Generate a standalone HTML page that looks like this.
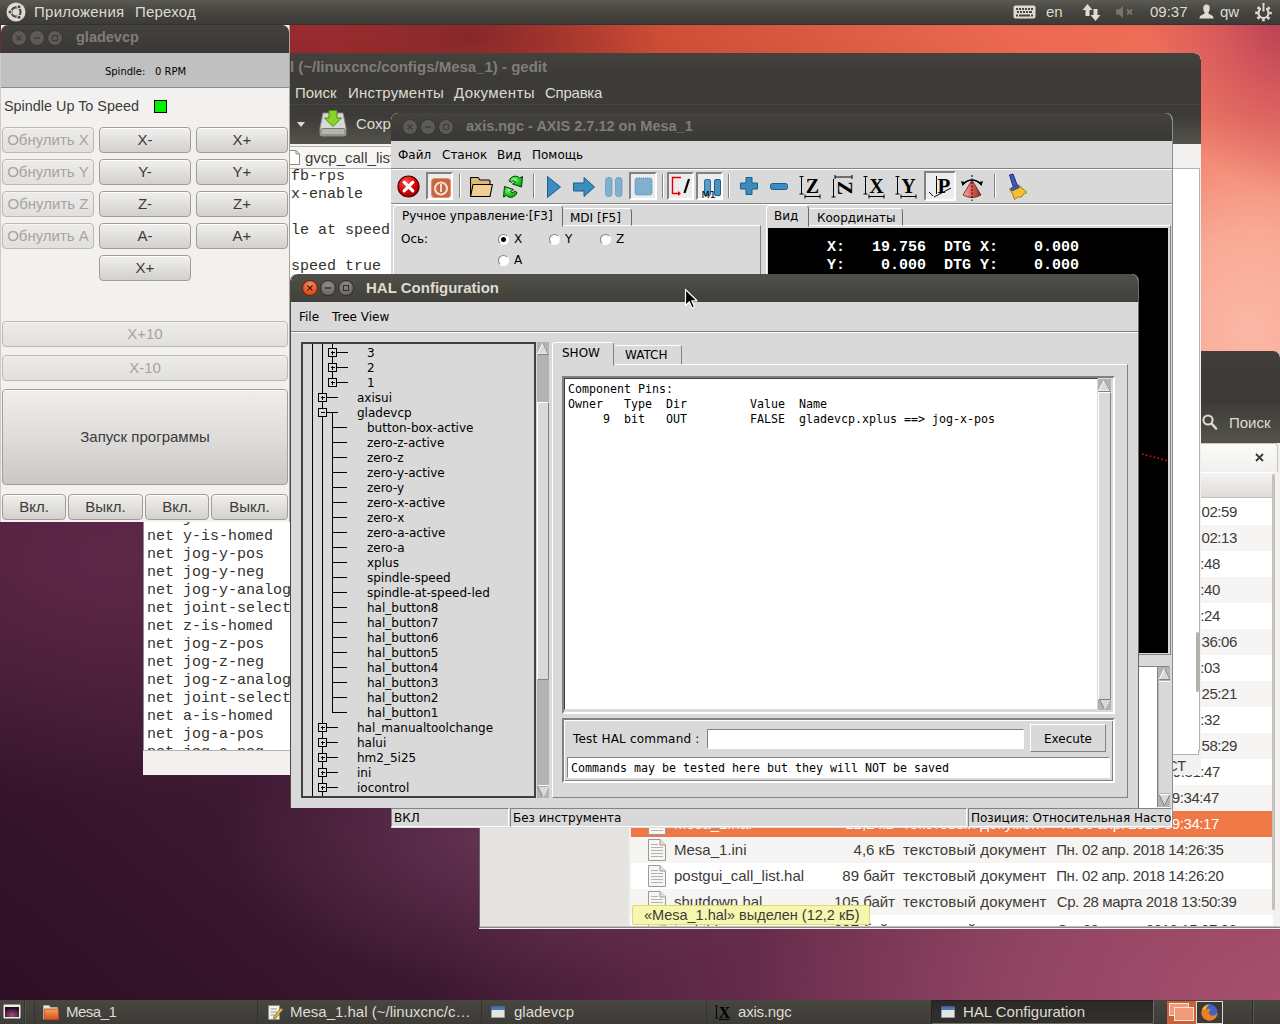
<!DOCTYPE html>
<html lang="ru">
<head>
<meta charset="utf-8">
<title>Desktop</title>
<style>
*{box-sizing:border-box;margin:0;padding:0}
html,body{width:1280px;height:1024px;overflow:hidden}
body{position:relative;font-family:"Liberation Sans","DejaVu Sans",sans-serif;font-size:15px;color:#3c3b37;
background:
 radial-gradient(ellipse 190px 70px at 470px 36px, rgba(104,26,36,.6) 0%, rgba(110,30,40,0) 100%),
 radial-gradient(ellipse 150px 190px at 1295px 5px, rgba(170,52,84,.9) 0%, rgba(190,64,88,.5) 50%, rgba(220,90,90,0) 100%),
 radial-gradient(ellipse 300px 330px at 1250px 330px, #fcb8a6 0%, rgba(250,176,156,.9) 30%, rgba(244,140,118,.5) 65%, rgba(238,110,90,0) 100%),
 radial-gradient(ellipse 900px 520px at 1330px 1010px, #aa5270 0%, rgba(150,72,102,.9) 35%, rgba(120,56,88,.5) 65%, rgba(90,40,66,0) 100%),
 radial-gradient(ellipse 300px 150px at 520px 840px, rgba(125,72,104,.55) 0%, rgba(100,56,84,0) 100%),
 radial-gradient(ellipse 480px 240px at 110px 560px, rgba(98,42,74,.85) 0%, rgba(80,34,60,0) 100%),
 linear-gradient(40deg, #2c0e22 0%, #38162c 15%, #431a36 25%, #6a2648 45%, #98282e 58%, #cc4c34 73%, #ec6a52 88%, #ee6c5a 100%);
}
.abs{position:absolute}
.win{position:absolute;overflow:hidden}
.tb{position:absolute;left:0;top:0;right:0;border-radius:7px 7px 0 0;background:linear-gradient(#43423d,#3c3b37 70%,#3a3935);color:#807d78;font-weight:bold;font-size:14.5px}
.tb .t{position:absolute;white-space:nowrap}
.wb{position:absolute;width:16px;height:16px;border-radius:8px;background:#5f5d58;border:1px solid #35342f}
.wb i{position:absolute;left:0;top:0;width:14px;height:14px;display:block}
.panel{position:absolute;left:0;width:1280px;color:#dfdbd2;font-size:15px;white-space:nowrap}
.dj{font-family:"DejaVu Sans","Liberation Sans",sans-serif}
.mono{font-family:"DejaVu Sans Mono","Liberation Mono",monospace}
.lm{font-family:"Liberation Mono","DejaVu Sans Mono",monospace}
.nw{white-space:nowrap}
/* gtk buttons in gladevcp */
.gb{position:absolute;height:26px;border:1px solid #a19d97;border-radius:4px;background:linear-gradient(#f1f0ee,#e3e2df 45%,#d1d0cd);text-align:center;line-height:24px;font-size:15px;color:#3c3b37;box-shadow:inset 0 1px 0 #fff;white-space:nowrap}
.gb.dis{color:#a6a39d;border-color:#bcb9b4;background:linear-gradient(#edecea,#e1e0dd);box-shadow:inset 0 1px 0 #f6f5f4}
</style>
</head>
<body>

<!-- ================= NAUTILUS ================= -->
<div class="win" id="naut" style="left:479px;top:351px;width:801px;height:578px;background:#f2f1f0;border-radius:0 7px 0 0">
<div class="abs" style="left:0;top:0;width:801px;height:92px;background:linear-gradient(#403f3a 0,#3c3b37 20px,#3c3b37 50px,#353430 51px,#3d3c38 52px,#55534b 92px)"></div>
<svg class="abs" style="left:723px;top:63px" width="16" height="17" viewBox="0 0 16 17"><circle cx="6" cy="6" r="4.6" fill="none" stroke="#dfdbd2" stroke-width="2"/><path d="M9.500 9.500 L14 14.500" stroke="#dfdbd2" stroke-width="2.6" stroke-linecap="round"/></svg>
<span class="abs nw" style="left:750px;top:63px;color:#dfdbd2;font-size:15px">Поиск</span>
<div class="abs" style="left:0;top:92px;width:799px;height:31px;background:linear-gradient(#fbfbfa,#f0efee);border-radius:0 4px 0 0;border-right:1px solid #c6c3be;border-top:1px solid #c6c3be"></div>
<svg class="abs" style="left:776px;top:102px" width="9" height="9" viewBox="0 0 9 9"><path d="M1 1 L8 8 M8 1 L1 8" stroke="#3c3b37" stroke-width="1.8"/></svg>
<div class="abs" style="left:0;top:119px;width:152px;height:460px;background:#e6e4e1;border-right:2px solid #f2f1f0"></div>
<div class="abs" style="left:152px;top:121px;width:642px;height:456px;background:#fff"></div>
<div class="abs" style="left:152px;top:122px;width:642px;height:25px;background:linear-gradient(#f4f3f2,#dedcd9);border-bottom:1px solid #c4c1bc"></div>
<div class="abs nw" style="left:152px;top:148px;width:642px;height:26px;background:#fff;color:#3c3b37;font-size:15px;line-height:26px"><svg class="abs" style="left:17px;top:2px" width="18" height="22" viewBox="0 0 18 22"><path d="M0.500 0.500 H12 L17.500 6 V21.500 H0.500 Z" fill="#f6f6f5" stroke="#9a9996"/><path d="M12 0.500 V6 H17.500" fill="#e4e4e2" stroke="#9a9996"/><path d="M3 5.500 H10 M3 8.500 H15 M3 11.500 H15 M3 14.500 H15 M3 17.500 H15" stroke="#b4b3b0"/></svg><span class="abs" style="left:43px">axis.ngc</span><span class="abs" style="right:378px">1,1 кБ</span><span class="abs" style="left:272px;letter-spacing:.17px">текстовый документ</span><span class="abs" style="letter-spacing:-0.4px;right:36.0px">Пт. 30 марта 2018 16:02:59</span></div>
<div class="abs nw" style="left:152px;top:174px;width:642px;height:26px;background:#f6f5f4;color:#3c3b37;font-size:15px;line-height:26px"><svg class="abs" style="left:17px;top:2px" width="18" height="22" viewBox="0 0 18 22"><path d="M0.500 0.500 H12 L17.500 6 V21.500 H0.500 Z" fill="#f6f6f5" stroke="#9a9996"/><path d="M12 0.500 V6 H17.500" fill="#e4e4e2" stroke="#9a9996"/><path d="M3 5.500 H10 M3 8.500 H15 M3 11.500 H15 M3 14.500 H15 M3 17.500 H15" stroke="#b4b3b0"/></svg><span class="abs" style="left:43px">custom.hal</span><span class="abs" style="right:378px">341 байт</span><span class="abs" style="left:272px;letter-spacing:.17px">текстовый документ</span><span class="abs" style="letter-spacing:-0.4px;right:36.0px">Пт. 30 марта 2018 16:02:13</span></div>
<div class="abs nw" style="left:152px;top:200px;width:642px;height:26px;background:#fff;color:#3c3b37;font-size:15px;line-height:26px"><svg class="abs" style="left:17px;top:2px" width="18" height="22" viewBox="0 0 18 22"><path d="M0.500 0.500 H12 L17.500 6 V21.500 H0.500 Z" fill="#f6f6f5" stroke="#9a9996"/><path d="M12 0.500 V6 H17.500" fill="#e4e4e2" stroke="#9a9996"/><path d="M3 5.500 H10 M3 8.500 H15 M3 11.500 H15 M3 14.500 H15 M3 17.500 H15" stroke="#b4b3b0"/></svg><span class="abs" style="left:43px">custom_postgui.hal</span><span class="abs" style="right:378px">120 байт</span><span class="abs" style="left:272px;letter-spacing:.17px">текстовый документ</span><span class="abs" style="letter-spacing:-0.4px;right:53.0px">Ср. 04 апр. 2018 16:11:48</span></div>
<div class="abs nw" style="left:152px;top:226px;width:642px;height:26px;background:#f6f5f4;color:#3c3b37;font-size:15px;line-height:26px"><svg class="abs" style="left:17px;top:2px" width="18" height="22" viewBox="0 0 18 22"><path d="M0.500 0.500 H12 L17.500 6 V21.500 H0.500 Z" fill="#f6f6f5" stroke="#9a9996"/><path d="M12 0.500 V6 H17.500" fill="#e4e4e2" stroke="#9a9996"/><path d="M3 5.500 H10 M3 8.500 H15 M3 11.500 H15 M3 14.500 H15 M3 17.500 H15" stroke="#b4b3b0"/></svg><span class="abs" style="left:43px">gvcp.glade</span><span class="abs" style="right:378px">24,8 кБ</span><span class="abs" style="left:272px;letter-spacing:.17px">текстовый документ</span><span class="abs" style="letter-spacing:-0.4px;right:53.0px">Ср. 04 апр. 2018 16:07:40</span></div>
<div class="abs nw" style="left:152px;top:252px;width:642px;height:26px;background:#fff;color:#3c3b37;font-size:15px;line-height:26px"><svg class="abs" style="left:17px;top:2px" width="18" height="22" viewBox="0 0 18 22"><path d="M0.500 0.500 H12 L17.500 6 V21.500 H0.500 Z" fill="#f6f6f5" stroke="#9a9996"/><path d="M12 0.500 V6 H17.500" fill="#e4e4e2" stroke="#9a9996"/><path d="M3 5.500 H10 M3 8.500 H15 M3 11.500 H15 M3 14.500 H15 M3 17.500 H15" stroke="#b4b3b0"/></svg><span class="abs" style="left:43px">gvcp.ui</span><span class="abs" style="right:378px">24,6 кБ</span><span class="abs" style="left:272px;letter-spacing:.17px">текстовый документ</span><span class="abs" style="letter-spacing:-0.4px;right:53.0px">Ср. 04 апр. 2018 15:58:24</span></div>
<div class="abs nw" style="left:152px;top:278px;width:642px;height:26px;background:#f6f5f4;color:#3c3b37;font-size:15px;line-height:26px"><svg class="abs" style="left:17px;top:2px" width="18" height="22" viewBox="0 0 18 22"><path d="M0.500 0.500 H12 L17.500 6 V21.500 H0.500 Z" fill="#f6f6f5" stroke="#9a9996"/><path d="M12 0.500 V6 H17.500" fill="#e4e4e2" stroke="#9a9996"/><path d="M3 5.500 H10 M3 8.500 H15 M3 11.500 H15 M3 14.500 H15 M3 17.500 H15" stroke="#b4b3b0"/></svg><span class="abs" style="left:43px">gvcp_call_list.hal</span><span class="abs" style="right:378px">1,9 кБ</span><span class="abs" style="left:272px;letter-spacing:.17px">текстовый документ</span><span class="abs" style="letter-spacing:-0.4px;right:36.0px">Пт. 30 марта 2018 15:36:06</span></div>
<div class="abs nw" style="left:152px;top:304px;width:642px;height:26px;background:#fff;color:#3c3b37;font-size:15px;line-height:26px"><svg class="abs" style="left:17px;top:2px" width="18" height="22" viewBox="0 0 18 22"><path d="M0.500 0.500 H12 L17.500 6 V21.500 H0.500 Z" fill="#f6f6f5" stroke="#9a9996"/><path d="M12 0.500 V6 H17.500" fill="#e4e4e2" stroke="#9a9996"/><path d="M3 5.500 H10 M3 8.500 H15 M3 11.500 H15 M3 14.500 H15 M3 17.500 H15" stroke="#b4b3b0"/></svg><span class="abs" style="left:43px">gvcp_options.hal</span><span class="abs" style="right:378px">212 байт</span><span class="abs" style="left:272px;letter-spacing:.17px">текстовый документ</span><span class="abs" style="letter-spacing:-0.4px;right:53.0px">Ср. 04 апр. 2018 15:21:03</span></div>
<div class="abs nw" style="left:152px;top:330px;width:642px;height:26px;background:#f6f5f4;color:#3c3b37;font-size:15px;line-height:26px"><svg class="abs" style="left:17px;top:2px" width="18" height="22" viewBox="0 0 18 22"><path d="M0.500 0.500 H12 L17.500 6 V21.500 H0.500 Z" fill="#f6f6f5" stroke="#9a9996"/><path d="M12 0.500 V6 H17.500" fill="#e4e4e2" stroke="#9a9996"/><path d="M3 5.500 H10 M3 8.500 H15 M3 11.500 H15 M3 14.500 H15 M3 17.500 H15" stroke="#b4b3b0"/></svg><span class="abs" style="left:43px">linuxcnc.var</span><span class="abs" style="right:378px">1,6 кБ</span><span class="abs" style="left:272px;letter-spacing:.17px">текстовый документ</span><span class="abs" style="letter-spacing:-0.4px;right:36.0px">Чт. 29 марта 2018 14:25:21</span></div>
<div class="abs nw" style="left:152px;top:356px;width:642px;height:26px;background:#fff;color:#3c3b37;font-size:15px;line-height:26px"><svg class="abs" style="left:17px;top:2px" width="18" height="22" viewBox="0 0 18 22"><path d="M0.500 0.500 H12 L17.500 6 V21.500 H0.500 Z" fill="#f6f6f5" stroke="#9a9996"/><path d="M12 0.500 V6 H17.500" fill="#e4e4e2" stroke="#9a9996"/><path d="M3 5.500 H10 M3 8.500 H15 M3 11.500 H15 M3 14.500 H15 M3 17.500 H15" stroke="#b4b3b0"/></svg><span class="abs" style="left:43px">linuxcnc.var.bak</span><span class="abs" style="right:378px">1,6 кБ</span><span class="abs" style="left:272px;letter-spacing:.17px">текстовый документ</span><span class="abs" style="letter-spacing:-0.4px;right:53.0px">Ср. 04 апр. 2018 14:18:32</span></div>
<div class="abs nw" style="left:152px;top:382px;width:642px;height:26px;background:#f6f5f4;color:#3c3b37;font-size:15px;line-height:26px"><svg class="abs" style="left:17px;top:2px" width="18" height="22" viewBox="0 0 18 22"><path d="M0.500 0.500 H12 L17.500 6 V21.500 H0.500 Z" fill="#f6f6f5" stroke="#9a9996"/><path d="M12 0.500 V6 H17.500" fill="#e4e4e2" stroke="#9a9996"/><path d="M3 5.500 H10 M3 8.500 H15 M3 11.500 H15 M3 14.500 H15 M3 17.500 H15" stroke="#b4b3b0"/></svg><span class="abs" style="left:43px">Mesa_1.pncconf</span><span class="abs" style="right:378px">18,4 кБ</span><span class="abs" style="left:272px;letter-spacing:.17px">текстовый документ</span><span class="abs" style="letter-spacing:-0.4px;right:36.0px">Ср. 28 марта 2018 17:58:29</span></div>
<div class="abs nw" style="left:152px;top:408px;width:642px;height:26px;background:#fff;color:#3c3b37;font-size:15px;line-height:26px"><svg class="abs" style="left:17px;top:2px" width="18" height="22" viewBox="0 0 18 22"><path d="M0.500 0.500 H12 L17.500 6 V21.500 H0.500 Z" fill="#f6f6f5" stroke="#9a9996"/><path d="M12 0.500 V6 H17.500" fill="#e4e4e2" stroke="#9a9996"/><path d="M3 5.500 H10 M3 8.500 H15 M3 11.500 H15 M3 14.500 H15 M3 17.500 H15" stroke="#b4b3b0"/></svg><span class="abs" style="left:43px">Mesa_1.hal~</span><span class="abs" style="right:378px">12,2 кБ</span><span class="abs" style="left:272px;letter-spacing:.17px">текстовый документ</span><span class="abs" style="letter-spacing:-0.4px;right:53.0px">Чт. 05 апр. 2018 09:31:47</span></div>
<div class="abs nw" style="left:152px;top:434px;width:642px;height:26px;background:#f6f5f4;color:#3c3b37;font-size:15px;line-height:26px"><svg class="abs" style="left:17px;top:2px" width="18" height="22" viewBox="0 0 18 22"><path d="M0.500 0.500 H12 L17.500 6 V21.500 H0.500 Z" fill="#f6f6f5" stroke="#9a9996"/><path d="M12 0.500 V6 H17.500" fill="#e4e4e2" stroke="#9a9996"/><path d="M3 5.500 H10 M3 8.500 H15 M3 11.500 H15 M3 14.500 H15 M3 17.500 H15" stroke="#b4b3b0"/></svg><span class="abs" style="left:43px">Mesa_1.ini~</span><span class="abs" style="right:378px">4,6 кБ</span><span class="abs" style="left:272px;letter-spacing:.17px">текстовый документ</span><span class="abs" style="letter-spacing:-0.4px;right:54.0px">Чт. 05 апр. 2018 09:34:47</span></div>
<div class="abs nw" style="left:152px;top:460px;width:642px;height:26px;background:#f07746;color:#fff;font-size:15px;line-height:26px"><svg class="abs" style="left:17px;top:2px" width="18" height="22" viewBox="0 0 18 22"><path d="M0.500 0.500 H12 L17.500 6 V21.500 H0.500 Z" fill="#f6f6f5" stroke="#9a9996"/><path d="M12 0.500 V6 H17.500" fill="#e4e4e2" stroke="#9a9996"/><path d="M3 5.500 H10 M3 8.500 H15 M3 11.500 H15 M3 14.500 H15 M3 17.500 H15" stroke="#b4b3b0"/></svg><span class="abs" style="left:43px">Mesa_1.hal</span><span class="abs" style="right:378px">12,2 кБ</span><span class="abs" style="left:272px;letter-spacing:.17px">текстовый документ</span><span class="abs" style="letter-spacing:-0.4px;right:54.0px">Чт. 05 апр. 2018 09:34:17</span></div>
<div class="abs nw" style="left:152px;top:486px;width:642px;height:26px;background:#f6f5f4;color:#3c3b37;font-size:15px;line-height:26px"><svg class="abs" style="left:17px;top:2px" width="18" height="22" viewBox="0 0 18 22"><path d="M0.500 0.500 H12 L17.500 6 V21.500 H0.500 Z" fill="#f6f6f5" stroke="#9a9996"/><path d="M12 0.500 V6 H17.500" fill="#e4e4e2" stroke="#9a9996"/><path d="M3 5.500 H10 M3 8.500 H15 M3 11.500 H15 M3 14.500 H15 M3 17.500 H15" stroke="#b4b3b0"/></svg><span class="abs" style="left:43px">Mesa_1.ini</span><span class="abs" style="right:378px">4,6 кБ</span><span class="abs" style="left:272px;letter-spacing:.17px">текстовый документ</span><span class="abs" style="letter-spacing:-0.4px;right:49.5px">Пн. 02 апр. 2018 14:26:35</span></div>
<div class="abs nw" style="left:152px;top:512px;width:642px;height:26px;background:#fff;color:#3c3b37;font-size:15px;line-height:26px"><svg class="abs" style="left:17px;top:2px" width="18" height="22" viewBox="0 0 18 22"><path d="M0.500 0.500 H12 L17.500 6 V21.500 H0.500 Z" fill="#f6f6f5" stroke="#9a9996"/><path d="M12 0.500 V6 H17.500" fill="#e4e4e2" stroke="#9a9996"/><path d="M3 5.500 H10 M3 8.500 H15 M3 11.500 H15 M3 14.500 H15 M3 17.500 H15" stroke="#b4b3b0"/></svg><span class="abs" style="left:43px">postgui_call_list.hal</span><span class="abs" style="right:378px">89 байт</span><span class="abs" style="left:272px;letter-spacing:.17px">текстовый документ</span><span class="abs" style="letter-spacing:-0.4px;right:49.5px">Пн. 02 апр. 2018 14:26:20</span></div>
<div class="abs nw" style="left:152px;top:538px;width:642px;height:26px;background:#f6f5f4;color:#3c3b37;font-size:15px;line-height:26px"><svg class="abs" style="left:17px;top:2px" width="18" height="22" viewBox="0 0 18 22"><path d="M0.500 0.500 H12 L17.500 6 V21.500 H0.500 Z" fill="#f6f6f5" stroke="#9a9996"/><path d="M12 0.500 V6 H17.500" fill="#e4e4e2" stroke="#9a9996"/><path d="M3 5.500 H10 M3 8.500 H15 M3 11.500 H15 M3 14.500 H15 M3 17.500 H15" stroke="#b4b3b0"/></svg><span class="abs" style="left:43px">shutdown.hal</span><span class="abs" style="right:378px">105 байт</span><span class="abs" style="left:272px;letter-spacing:.17px">текстовый документ</span><span class="abs" style="letter-spacing:-0.4px;right:36.5px">Ср. 28 марта 2018 13:50:39</span></div>
<div class="abs nw" style="left:152px;top:566px;width:642px;height:26px;background:#fff;color:#3c3b37;font-size:15px;line-height:26px"><svg class="abs" style="left:17px;top:2px" width="18" height="22" viewBox="0 0 18 22"><path d="M0.500 0.500 H12 L17.500 6 V21.500 H0.500 Z" fill="#f6f6f5" stroke="#9a9996"/><path d="M12 0.500 V6 H17.500" fill="#e4e4e2" stroke="#9a9996"/><path d="M3 5.500 H10 M3 8.500 H15 M3 11.500 H15 M3 14.500 H15 M3 17.500 H15" stroke="#b4b3b0"/></svg><span class="abs" style="left:43px">tool.tbl</span><span class="abs" style="right:378px">297 байт</span><span class="abs" style="left:272px;letter-spacing:.17px">текстовый документ</span><span class="abs" style="letter-spacing:-0.4px;right:36.5px">Ср. 28 марта 2018 15:07:26</span></div>
<div class="abs" style="left:794px;top:121px;width:8px;height:456px;background:#f2f1f0"></div>
<div class="abs" style="left:793px;top:123px;width:3px;height:436px;background:#c4c1bb;border-radius:2px"></div>
<div class="abs nw" style="left:153px;top:554px;width:238px;height:20px;background:#f6f6ae;border:1px solid #dcdc6e;border-radius:2px;font-size:14.5px;line-height:18px;padding-left:11px;color:#3c3b37">«Mesa_1.hal» выделен (12,2 кБ)</div>
<div class="abs" style="left:0;top:575px;width:801px;height:3px;background:#f2f1f0;border-top:1px solid #c4c1bc"></div>
<div class="abs" style="left:0;top:0;width:1px;height:577px;background:#6a6863"></div><div class="abs" style="left:0;top:576px;width:801px;height:1px;background:#8a8883"></div>
</div>

<!-- ================= GEDIT ================= -->
<div class="win" id="gedit" style="left:143px;top:53px;width:1058px;height:722px;background:#f2f1f0;border-radius:7px 7px 0 0">
<div class="tb" style="height:53px;background:linear-gradient(#43423d,#3c3b37 40%,#3c3b37)"><span class="t" style="left:71px;top:5px;font-size:15px">Mesa_1.hal (~/linuxcnc/configs/Mesa_1) - gedit</span></div>
<div class="abs nw" style="left:0;top:27px;width:1058px;height:26px;color:#dfdbd2;font-size:15px"><span class="abs" style="left:152px;top:4px">Поиск</span><span class="abs" style="left:205px;top:4px;letter-spacing:.23px">Инструменты</span><span class="abs" style="left:311px;top:4px;letter-spacing:.4px">Документы</span><span class="abs" style="left:402px;top:4px;letter-spacing:-.25px">Справка</span></div>
<div class="abs" style="left:0;top:51px;width:1058px;height:40px;background:linear-gradient(#3c3b37,#3d3c38 30%,#55534c);border-top:1px solid #45443f"></div>
<div class="abs" style="left:154px;top:69px;width:0;height:0;border-left:4px solid transparent;border-right:4px solid transparent;border-top:5px solid #dfdbd2"></div>
<svg class="abs" style="left:176px;top:56px" width="28" height="28" viewBox="0 0 28 28"><path d="M4 4 H24 L27 19 V25 Q27 27 25 27 H3 Q1 27 1 25 V19 Z" fill="#d8d8d4" stroke="#8a8a86"/><rect x="2" y="19.5" width="24" height="6.5" rx="1.5" fill="#b4b4b0" stroke="#77766f"/><path d="M10 1.5 H18 V9 H22.5 L14 17.5 L5.5 9 H10 Z" fill="#8ad428" stroke="#4c8a10"/></svg>
<span class="abs nw" style="left:213px;top:62px;color:#dfdbd2;font-size:15px">Сохранить</span>
<div class="abs" style="left:0;top:91px;width:1058px;height:24px;background:#f2f1f0"></div>
<div class="abs" style="left:100px;top:93px;width:300px;height:22px;background:#f7f6f5;border:1px solid #b6b3ae;border-bottom:none;border-radius:4px 4px 0 0"></div>
<svg class="abs" style="left:146px;top:97px" width="11" height="15" viewBox="0 0 11 15"><path d="M0.5 0.5 H7 L10.5 4 V14.5 H0.5 Z" fill="#fff" stroke="#8a8883"/><path d="M7 0.5 V4 H10.5" fill="none" stroke="#8a8883"/></svg>
<span class="abs nw" style="left:162px;top:96px;font-size:15px;color:#3c3b37">gvcp_call_list.hal</span>
<div class="abs" style="left:0;top:115px;width:1057px;height:583px;background:#fff;border:1px solid #b6b3ae;border-left:1px solid #8f8d88"></div>
<div class="abs lm nw" style="left:0;top:116px;width:1056px;height:581px;padding-top:0;overflow:hidden;font-size:15px;line-height:18px;color:#33322e"><div class="abs" style="left:148px;top:-1px">fb-rps</div><div class="abs" style="left:148px;top:17px">x-enable</div><div class="abs" style="left:148px;top:53px">le at speed</div><div class="abs" style="left:148px;top:89px">speed true</div><div class="abs" style="left:4px;top:341px">net joint-select-a</div><div class="abs" style="left:4px;top:359px">net y-is-homed</div><div class="abs" style="left:4px;top:377px">net jog-y-pos</div><div class="abs" style="left:4px;top:395px">net jog-y-neg</div><div class="abs" style="left:4px;top:413px">net jog-y-analog</div><div class="abs" style="left:4px;top:431px">net joint-select</div><div class="abs" style="left:4px;top:449px">net z-is-homed</div><div class="abs" style="left:4px;top:467px">net jog-z-pos</div><div class="abs" style="left:4px;top:485px">net jog-z-neg</div><div class="abs" style="left:4px;top:503px">net jog-z-analog</div><div class="abs" style="left:4px;top:521px">net joint-select</div><div class="abs" style="left:4px;top:539px">net a-is-homed</div><div class="abs" style="left:4px;top:557px">net jog-a-pos</div><div class="abs" style="left:4px;top:575px">net jog-a-neg</div></div>
<div class="abs" style="left:1053px;top:579px;width:3px;height:60px;background:#b5b2ac;border-radius:2px"></div>
<div class="abs" style="left:0;top:698px;width:1058px;height:24px;background:#f2f1f0"></div>
<div id="gwp" class="abs" style="left:1029px;top:697px;width:27px;height:5px;background:#fff;border-right:1px solid #b6b3ae;border-bottom:1px solid #b6b3ae"></div>
<span class="abs nw" style="left:1015px;top:705px;font-size:14.5px">ВСТ</span>
</div>

<!-- ================= AXIS ================= -->
<div class="win" id="axis" style="left:391px;top:113px;width:782px;height:715px;background:#d9d9d9;border-radius:7px 7px 0 0;border-right:1px solid #8e8e8e">
<div class="tb" style="height:28px"><span class="wb" style="left:11px;top:6px;background:#5d5b56;border-color:#363531"><svg width="14" height="14" viewBox="0 0 14 14" style="display:block"><path d="M4.500 4.500 L9.500 9.500 M9.500 4.500 L4.500 9.500" stroke="#3e3d39" stroke-width="1.300"/></svg></span><span class="wb" style="left:29px;top:6px;background:#5d5b56;border-color:#363531"><svg width="14" height="14" viewBox="0 0 14 14" style="display:block"><path d="M4 7 H10" stroke="#3e3d39" stroke-width="1.400"/></svg></span><span class="wb" style="left:47px;top:6px;background:#5d5b56;border-color:#363531"><svg width="14" height="14" viewBox="0 0 14 14" style="display:block"><rect x="4.500" y="4.500" width="5" height="5" fill="none" stroke="#3e3d39" stroke-width="1.100"/></svg></span><span class="t" style="left:75px;top:5px">axis.ngc - AXIS 2.7.12 on Mesa_1</span></div>
<div class="abs dj nw" style="left:0;top:28px;width:781px;height:28px;font-size:12px;color:#000;border-bottom:1px solid #828282;box-shadow:0 1px 0 #fff"><span class="abs" style="left:7px;top:7px">Файл</span><span class="abs" style="left:51px;top:7px">Станок</span><span class="abs" style="left:106px;top:7px">Вид</span><span class="abs" style="left:141px;top:7px">Помощь</span></div>
<div class="abs" style="left:0;top:90px;width:781px;height:2px;border-top:1px solid #828282;border-bottom:1px solid #fff"></div>
<svg class="abs" style="left:6px;top:62px" width="23" height="23" viewBox="0 0 24 24"><defs><radialGradient id="rg1" cx="0.4" cy="0.3" r="0.8"><stop offset="0" stop-color="#ff5050"/><stop offset="0.6" stop-color="#d40000"/><stop offset="1" stop-color="#7a0000"/></radialGradient></defs><circle cx="12" cy="12" r="11" fill="url(#rg1)" stroke="#4a0000" stroke-width="1.2"/><path d="M7.5 7.5 L16.5 16.5 M16.5 7.5 L7.5 16.5" stroke="#fff" stroke-width="3.4" stroke-linecap="round"/></svg>
<div class="abs" style="left:35px;top:59px;width:27px;height:28px;border:2px solid;border-color:#828282 #fff #fff #828282;background:#ececec"></div>
<svg class="abs" style="left:40px;top:65px" width="20" height="20" viewBox="0 0 20 20"><rect x="0.5" y="0.5" width="19" height="19" rx="3" fill="#c4673f" stroke="#e09070"/><circle cx="10" cy="10.5" r="6" fill="none" stroke="#f6ddd0" stroke-width="2.2"/><rect x="9" y="6" width="2" height="8" fill="#f6ddd0"/></svg>
<div class="abs" style="left:68px;top:61px;width:2px;height:24px;border-left:1px solid #828282;border-right:1px solid #fff"></div>
<svg class="abs" style="left:79px;top:64px" width="23" height="20" viewBox="0 0 23 20"><path d="M0.500 19 V1.500 Q0.500 0.500 1.500 0.500 H8 L10 3 H19 Q20 3 20 4 V8" fill="#dcb878" stroke="#000" stroke-width="1.100"/><path d="M0.600 19.500 L3 7.500 H22.400 L20 19.500 Z" fill="#f0cf92" stroke="#000" stroke-width="1.100" stroke-linejoin="round"/></svg>
<svg class="abs" style="left:112px;top:62px" width="21" height="24" viewBox="0 0 21 24"><defs><radialGradient id="gg" cx="0.4" cy="0.35" r="0.7"><stop offset="0" stop-color="#9af89a"/><stop offset="0.5" stop-color="#22d022"/><stop offset="1" stop-color="#10a010"/></radialGradient></defs><path d="M6 6 C8 0.500 14 0 16.500 3 L19.500 1.500 L18.500 12 L9.500 9 L12.500 7 C11 5.500 9.500 5.500 8.500 7.500 Z" fill="url(#gg)" stroke="#063c06" stroke-width="1" stroke-linejoin="round"/><path d="M14 17.500 C12 23 6 23.500 3.500 20.500 L0.500 22 L1.500 11.500 L10.500 14.500 L7.500 16.500 C9 18 10.500 18 11.500 16 Z" fill="url(#gg)" stroke="#063c06" stroke-width="1" stroke-linejoin="round"/></svg>
<div class="abs" style="left:142px;top:61px;width:2px;height:24px;border-left:1px solid #828282;border-right:1px solid #fff"></div>
<svg class="abs" style="left:155px;top:62px" width="16" height="24" viewBox="0 0 16 24"><path d="M1.5 1.5 L14.5 12 L1.5 22.5 Z" fill="#3d8cc0" stroke="#1d5c8c" stroke-linejoin="round"/></svg>
<svg class="abs" style="left:181px;top:63px" width="24" height="22" viewBox="0 0 24 22"><path d="M1.5 7 H12 V1.5 L22.5 11 L12 20.5 V15 H1.5 Z" fill="#3d8cc0" stroke="#1d5c8c" stroke-linejoin="round"/></svg>
<svg class="abs" style="left:213px;top:63px" width="20" height="22" viewBox="0 0 20 22"><rect x="1.5" y="1.5" width="6.5" height="19" rx="2.5" fill="#7fb0d0" stroke="#4a88b4" stroke-dasharray="1 1"/><rect x="11.5" y="1.5" width="6.5" height="19" rx="2.5" fill="#7fb0d0" stroke="#4a88b4" stroke-dasharray="1 1"/></svg>
<div class="abs" style="left:238px;top:59px;width:28px;height:28px;border:2px solid;border-color:#828282 #fff #fff #828282;background:#ececec"></div>
<svg class="abs" style="left:243px;top:64px" width="19" height="19" viewBox="0 0 19 19"><rect x="1" y="1" width="17" height="17" rx="2" fill="#7fb0d0" stroke="#4a88b4" stroke-dasharray="1 1"/></svg>
<div class="abs" style="left:271px;top:61px;width:2px;height:24px;border-left:1px solid #828282;border-right:1px solid #fff"></div>
<div class="abs" style="left:276px;top:59px;width:27px;height:28px;border:2px solid;border-color:#828282 #fff #fff #828282;background:#ececec"></div>
<svg class="abs" style="left:279px;top:62px" width="22" height="22" viewBox="0 0 22 22"><path d="M11 2.5 H2.5 V18.5 H9" fill="none" stroke="#e00000" stroke-width="1.4"/><path d="M8 16 L11 18.5 L8 21 Z" fill="#e00000"/><path d="M19 4 L14.5 18" stroke="#000" stroke-width="2.2"/></svg>
<div class="abs" style="left:305px;top:59px;width:27px;height:28px;border:2px solid;border-color:#828282 #fff #fff #828282;background:#ececec"></div>
<svg class="abs" style="left:308px;top:62px" width="24" height="24" viewBox="0 0 24 24"><rect x="5.500" y="4.500" width="6" height="16" rx="1.500" fill="#5a9cc8" stroke="#2d6c9c"/><rect x="15.500" y="4.500" width="6" height="16" rx="1.500" fill="#4a90c0" stroke="#1d5c8c"/><text x="2.500" y="22.500" font-family="DejaVu Sans,sans-serif" font-size="9.500" fill="#000">M1</text></svg>
<div class="abs" style="left:337px;top:61px;width:2px;height:24px;border-left:1px solid #828282;border-right:1px solid #fff"></div>
<svg class="abs" style="left:348px;top:63px" width="20" height="20" viewBox="0 0 20 20"><path d="M7 1.5 H13 V7 H18.5 V13 H13 V18.5 H7 V13 H1.5 V7 H7 Z" fill="#3d8cc0" stroke="#1d5c8c" stroke-linejoin="round"/></svg>
<svg class="abs" style="left:378px;top:69px" width="20" height="9" viewBox="0 0 20 9"><rect x="1.5" y="1.5" width="17" height="6" rx="2" fill="#3d8cc0" stroke="#1d5c8c"/></svg>
<svg class="abs" style="left:408px;top:62px" width="24" height="25" viewBox="0 0 24 25"><path d="M2.5 1 V19 M0.5 1.5 H4.5 M0.5 19 H4.5 M6 21.5 H21 M6 19.5 V23.5 M21 19.5 V23.5" stroke="#000" stroke-width="1" fill="none"/><text x="13.5" y="18" text-anchor="middle" font-family="Liberation Serif,serif" font-weight="bold" font-size="20" fill="#000">Z</text></svg>
<svg class="abs" style="left:440px;top:62px" width="24" height="25" viewBox="0 0 24 25"><path d="M2.5 4 V22 M0.5 22 H4.5 M4 2 H21 M4 0 V4 M21 0 V4" stroke="#000" stroke-width="1" fill="none"/><text x="13" y="19" text-anchor="middle" transform="rotate(90 13 13)" font-family="Liberation Serif,serif" font-weight="bold" font-size="21" fill="#000">Z</text></svg>
<svg class="abs" style="left:472px;top:62px" width="24" height="25" viewBox="0 0 24 25"><path d="M2.5 1 V19 M0.5 1.5 H4.5 M0.5 19 H4.5 M6 21.5 H21 M6 19.5 V23.5 M21 19.5 V23.5" stroke="#000" stroke-width="1" fill="none"/><text x="13.5" y="18" text-anchor="middle" font-family="Liberation Serif,serif" font-weight="bold" font-size="20" fill="#000">X</text></svg>
<svg class="abs" style="left:504px;top:62px" width="24" height="25" viewBox="0 0 24 25"><path d="M2.5 1 V19 M0.5 1.5 H4.5 M0.5 19 H4.5 M6 21.5 H21 M6 19.5 V23.5 M21 19.5 V23.5" stroke="#000" stroke-width="1" fill="none"/><text x="13.5" y="18" text-anchor="middle" font-family="Liberation Serif,serif" font-weight="bold" font-size="20" fill="#000">Y</text></svg>
<div class="abs" style="left:533px;top:58px;width:32px;height:30px;border:2px solid;border-color:#828282 #fff #fff #828282;background:#ececec"></div>
<svg class="abs" style="left:537px;top:62px" width="24" height="25" viewBox="0 0 24 25"><path d="M8.5 1 V19 M1 17 L5 21 M6 22 L23 13" stroke="#000" stroke-width="1" fill="none"/><text x="16" y="18" text-anchor="middle" font-family="Liberation Serif,serif" font-weight="bold" font-size="21" fill="#000">P</text></svg>
<svg class="abs" style="left:568px;top:61px" width="26" height="27" viewBox="0 0 26 27"><defs><linearGradient id="cg" x1="0" x2="1"><stop offset="0" stop-color="#f6b0a8"/><stop offset="0.5" stop-color="#e06058"/><stop offset="1" stop-color="#8c2a28"/></linearGradient></defs><path d="M13 6 L22 21 Q13 26 4 21 Z" fill="url(#cg)" stroke="#6a1a18" stroke-width="0.8"/><path d="M13 1 V27" stroke="#000" stroke-width="1" stroke-dasharray="2 1.5"/><path d="M4 10 Q13 2 22 10" fill="none" stroke="#000" stroke-width="1.3"/><path d="M2 7 L3.5 12 L7 8.5 Z M24 7 L22.500 12 L19 8.5 Z" fill="#000"/></svg>
<div class="abs" style="left:603px;top:61px;width:2px;height:24px;border-left:1px solid #828282;border-right:1px solid #fff"></div>
<svg class="abs" style="left:612px;top:60px" width="26" height="28" viewBox="0 0 26 28"><path d="M6.500 2 L10 1 L14.500 13 L10.500 14.500 Z" fill="#3a5cc0" stroke="#1c2f78" stroke-linejoin="round"/><path d="M6.500 16 L15.500 12 L24 19.500 Q20 20 18.500 24 Q15 22.500 11.500 26.500 Q10.500 21 6.500 16 Z" fill="#f4c030" stroke="#a87a10" stroke-linejoin="round"/><path d="M7.500 15.500 L15 12 L16.500 14.500 L9 18 Z" fill="#3a5cc0" stroke="#1c2f78" stroke-width="0.600"/></svg>
<div class="abs" style="left:2px;top:112px;width:368px;height:580px;border:1px solid;border-color:#fff #828282 #828282 #fff"></div>
<div class="abs dj nw" style="left:2px;top:92px;width:170px;height:22px;background:#d9d9d9;border:1px solid;border-color:#fff #6a6a6a #d9d9d9 #fff;border-radius:4px 4px 0 0;font-size:12px;color:#000;padding:3px 0 0 8px">Ручное управление·[F3]</div>
<div class="abs dj nw" style="left:172px;top:95px;width:69px;height:18px;background:#d9d9d9;border:1px solid;border-color:#fff #6a6a6a #fff #d9d9d9;border-radius:0 4px 0 0;font-size:12px;color:#000;padding:2px 0 0 6px">MDI [F5]</div>
<span class="abs dj nw" style="left:10px;top:119px;font-size:12px;color:#000">Ось:</span>
<div class="abs" style="left:107px;top:121px;width:11px;height:11px;border-radius:6px;background:#fff;border:1px solid;border-color:#828282 #fff #fff #828282"></div><div class="abs" style="left:110px;top:124px;width:5px;height:5px;border-radius:3px;background:#000"></div><span class="abs dj nw" style="left:123px;top:119px;font-size:12px;color:#000">X</span>
<div class="abs" style="left:158px;top:121px;width:11px;height:11px;border-radius:6px;background:#fff;border:1px solid;border-color:#828282 #fff #fff #828282"></div><span class="abs dj nw" style="left:174px;top:119px;font-size:12px;color:#000">Y</span>
<div class="abs" style="left:209px;top:121px;width:11px;height:11px;border-radius:6px;background:#fff;border:1px solid;border-color:#828282 #fff #fff #828282"></div><span class="abs dj nw" style="left:225px;top:119px;font-size:12px;color:#000">Z</span>
<div class="abs" style="left:107px;top:142px;width:11px;height:11px;border-radius:6px;background:#fff;border:1px solid;border-color:#828282 #fff #fff #828282"></div><span class="abs dj nw" style="left:123px;top:140px;font-size:12px;color:#000">A</span>
<div class="abs" style="left:375px;top:112px;width:405px;height:430px;border:1px solid;border-color:#fff #828282 #828282 #fff"></div>
<div class="abs dj nw" style="left:375px;top:92px;width:43px;height:22px;background:#d9d9d9;border:1px solid;border-color:#fff #6a6a6a #d9d9d9 #fff;border-radius:4px 4px 0 0;font-size:12px;color:#000;padding:3px 0 0 7px">Вид</div>
<div class="abs dj nw" style="left:418px;top:95px;width:94px;height:18px;background:#d9d9d9;border:1px solid;border-color:#fff #6a6a6a #fff #d9d9d9;border-radius:0 4px 0 0;font-size:12px;color:#000;padding:2px 0 0 7px">Координаты</div>
<div class="abs" style="left:377px;top:115px;width:400px;height:425px;background:#000"></div>
<div class="abs lm" style="left:436px;top:126px;font-size:15px;line-height:18px;font-weight:bold;color:#fff;white-space:pre">X:   19.756  DTG X:    0.000
Y:    0.000  DTG Y:    0.000</div>
<svg class="abs" style="left:750px;top:340px" width="30" height="10" viewBox="0 0 30 10"><path d="M1 1 L28 8" stroke="#ff1010" stroke-width="1.6" stroke-dasharray="1.5 2.5"/></svg>
<div class="abs" style="left:375px;top:553px;width:404px;height:142px;background:#fff;border:1px solid;border-color:#828282 #fff #fff #828282"></div>
<div class="abs" style="left:766px;top:554px;width:13px;height:140px;background:#b3b3b3;border-left:1px solid #828282"></div>
<svg class="abs" style="left:767px;top:554px" width="13" height="140" viewBox="0 0 13 140"><path d="M1 12.500 L6.500 1.500 L12 12.500 Z" fill="#d9d9d9" stroke="#fff"/><path d="M1 12.500 H12 L6.500 1.500" fill="none" stroke="#828282"/><rect x="1" y="14" width="11" height="112" fill="#d9d9d9"/><path d="M1 14.500 H12" stroke="#fff"/><path d="M1 127.500 L6.500 138.500 L12 127.500 Z" fill="#d9d9d9" stroke="#828282"/><path d="M1 127.500 H12" stroke="#fff"/></svg>
<div class="abs dj nw" style="left:0px;top:695px;width:118px;height:19px;border:1px solid;border-color:#828282 #fff #fff #828282;font-size:12px;color:#000;padding:0 0 0 2px;line-height:19px;overflow:hidden">ВКЛ</div>
<div class="abs dj nw" style="left:119px;top:695px;width:457px;height:19px;border:1px solid;border-color:#828282 #fff #fff #828282;font-size:12px;color:#000;padding:0 0 0 2px;line-height:19px;overflow:hidden">Без инструмента</div>
<div class="abs dj nw" style="left:577px;top:695px;width:204px;height:19px;border:1px solid;border-color:#828282 #fff #fff #828282;font-size:12px;color:#000;padding:0 0 0 2px;line-height:19px;overflow:hidden">Позиция: Относительная Настоящая</div>
</div>

<!-- ================= HAL ================= -->
<div class="win" id="hal" style="left:290px;top:274px;width:849px;height:534px;background:#d9d9d9;border-radius:7px 7px 0 0;border-left:1px solid #4a4944;border-right:1px solid #6a6965">
<div class="tb" style="height:28px;color:#dfdbd2;font-size:15px;background:linear-gradient(#504f49,#403f3a)"><span class="wb" style="left:11px;top:6px;background:radial-gradient(circle at 50% 30%,#f4906a,#e2501c 65%,#c8400f);border-color:#6e2408"><svg width="14" height="14" viewBox="0 0 14 14" style="display:block"><path d="M4.500 4.500 L9.500 9.500 M9.500 4.500 L4.500 9.500" stroke="#4a1a08" stroke-width="1.300"/></svg></span><span class="wb" style="left:29px;top:6px;background:radial-gradient(circle at 50% 30%,#8e8c85,#6f6d66 70%);border-color:#2e2d2a"><svg width="14" height="14" viewBox="0 0 14 14" style="display:block"><path d="M4 7 H10" stroke="#33322e" stroke-width="1.400"/></svg></span><span class="wb" style="left:47px;top:6px;background:radial-gradient(circle at 50% 30%,#8e8c85,#6f6d66 70%);border-color:#2e2d2a"><svg width="14" height="14" viewBox="0 0 14 14" style="display:block"><rect x="4.500" y="4.500" width="5" height="5" fill="none" stroke="#33322e" stroke-width="1.100"/></svg></span><span class="t" style="left:75px;top:5px">HAL Configuration</span></div>
<div class="abs dj nw" style="left:0;top:28px;width:847px;height:30px;font-size:12px;color:#000;border-bottom:1px solid #828282;box-shadow:0 1px 0 #fff"><span class="abs" style="left:8px;top:8px">File</span><span class="abs" style="left:41px;top:8px">Tree View</span></div>
<div class="abs" style="left:10px;top:68px;width:235px;height:456px;border:2px solid;border-color:#404040 #404040 #404040 #404040;background:#d9d9d9"></div>
<svg class="abs" style="left:12px;top:70px" width="231" height="452" viewBox="2 2 231 452" shape-rendering="crispEdges"><path d="M11.5 0 V456 M21.5 0 V456 M31.5 0 V40.5 M31.5 70.5 V370.5" stroke="#000" fill="none"/><path d="M35.5 10.5 H46.5" stroke="#000"/><rect x="27.5" y="6.5" width="8" height="8" fill="#d9d9d9" stroke="#000"/><path d="M29.5 10.5 H33.5" stroke="#000"/><path d="M31.5 8.5 V12.5" stroke="#000"/><path d="M35.5 25.5 H46.5" stroke="#000"/><rect x="27.5" y="21.5" width="8" height="8" fill="#d9d9d9" stroke="#000"/><path d="M29.5 25.5 H33.5" stroke="#000"/><path d="M31.5 23.5 V27.5" stroke="#000"/><path d="M35.5 40.5 H46.5" stroke="#000"/><rect x="27.5" y="36.5" width="8" height="8" fill="#d9d9d9" stroke="#000"/><path d="M29.5 40.5 H33.5" stroke="#000"/><path d="M31.5 38.5 V42.5" stroke="#000"/><path d="M25.5 55.5 H36.5" stroke="#000"/><rect x="17.5" y="51.5" width="8" height="8" fill="#d9d9d9" stroke="#000"/><path d="M19.5 55.5 H23.5" stroke="#000"/><path d="M21.5 53.5 V57.5" stroke="#000"/><path d="M25.5 70.5 H36.5" stroke="#000"/><rect x="17.5" y="66.5" width="8" height="8" fill="#d9d9d9" stroke="#000"/><path d="M19.5 70.5 H23.5" stroke="#000"/><path d="M31.5 85.5 H45.5" stroke="#000"/><path d="M31.5 100.5 H45.5" stroke="#000"/><path d="M31.5 115.5 H45.5" stroke="#000"/><path d="M31.5 130.5 H45.5" stroke="#000"/><path d="M31.5 145.5 H45.5" stroke="#000"/><path d="M31.5 160.5 H45.5" stroke="#000"/><path d="M31.5 175.5 H45.5" stroke="#000"/><path d="M31.5 190.5 H45.5" stroke="#000"/><path d="M31.5 205.5 H45.5" stroke="#000"/><path d="M31.5 220.5 H45.5" stroke="#000"/><path d="M31.5 235.5 H45.5" stroke="#000"/><path d="M31.5 250.5 H45.5" stroke="#000"/><path d="M31.5 265.5 H45.5" stroke="#000"/><path d="M31.5 280.5 H45.5" stroke="#000"/><path d="M31.5 295.5 H45.5" stroke="#000"/><path d="M31.5 310.5 H45.5" stroke="#000"/><path d="M31.5 325.5 H45.5" stroke="#000"/><path d="M31.5 340.5 H45.5" stroke="#000"/><path d="M31.5 355.5 H45.5" stroke="#000"/><path d="M31.5 370.5 H45.5" stroke="#000"/><path d="M25.5 385.5 H36.5" stroke="#000"/><rect x="17.5" y="381.5" width="8" height="8" fill="#d9d9d9" stroke="#000"/><path d="M19.5 385.5 H23.5" stroke="#000"/><path d="M21.5 383.5 V387.5" stroke="#000"/><path d="M25.5 400.5 H36.5" stroke="#000"/><rect x="17.5" y="396.5" width="8" height="8" fill="#d9d9d9" stroke="#000"/><path d="M19.5 400.5 H23.5" stroke="#000"/><path d="M21.5 398.5 V402.5" stroke="#000"/><path d="M25.5 415.5 H36.5" stroke="#000"/><rect x="17.5" y="411.5" width="8" height="8" fill="#d9d9d9" stroke="#000"/><path d="M19.5 415.5 H23.5" stroke="#000"/><path d="M21.5 413.5 V417.5" stroke="#000"/><path d="M25.5 430.5 H36.5" stroke="#000"/><rect x="17.5" y="426.5" width="8" height="8" fill="#d9d9d9" stroke="#000"/><path d="M19.5 430.5 H23.5" stroke="#000"/><path d="M21.5 428.5 V432.5" stroke="#000"/><path d="M25.5 445.5 H36.5" stroke="#000"/><rect x="17.5" y="441.5" width="8" height="8" fill="#d9d9d9" stroke="#000"/><path d="M19.5 445.5 H23.5" stroke="#000"/><path d="M21.5 443.5 V447.5" stroke="#000"/></svg>
<div class="abs dj nw" style="left:12px;top:70px;width:231px;height:452px;overflow:hidden;font-size:12px;line-height:15px;color:#000"><div class="abs" style="left:64px;top:2px">3</div><div class="abs" style="left:64px;top:17px">2</div><div class="abs" style="left:64px;top:32px">1</div><div class="abs" style="left:54px;top:47px">axisui</div><div class="abs" style="left:54px;top:62px">gladevcp</div><div class="abs" style="left:64px;top:77px">button-box-active</div><div class="abs" style="left:64px;top:92px">zero-z-active</div><div class="abs" style="left:64px;top:107px">zero-z</div><div class="abs" style="left:64px;top:122px">zero-y-active</div><div class="abs" style="left:64px;top:137px">zero-y</div><div class="abs" style="left:64px;top:152px">zero-x-active</div><div class="abs" style="left:64px;top:167px">zero-x</div><div class="abs" style="left:64px;top:182px">zero-a-active</div><div class="abs" style="left:64px;top:197px">zero-a</div><div class="abs" style="left:64px;top:212px">xplus</div><div class="abs" style="left:64px;top:227px">spindle-speed</div><div class="abs" style="left:64px;top:242px">spindle-at-speed-led</div><div class="abs" style="left:64px;top:257px">hal_button8</div><div class="abs" style="left:64px;top:272px">hal_button7</div><div class="abs" style="left:64px;top:287px">hal_button6</div><div class="abs" style="left:64px;top:302px">hal_button5</div><div class="abs" style="left:64px;top:317px">hal_button4</div><div class="abs" style="left:64px;top:332px">hal_button3</div><div class="abs" style="left:64px;top:347px">hal_button2</div><div class="abs" style="left:64px;top:362px">hal_button1</div><div class="abs" style="left:54px;top:377px">hal_manualtoolchange</div><div class="abs" style="left:54px;top:392px">halui</div><div class="abs" style="left:54px;top:407px">hm2_5i25</div><div class="abs" style="left:54px;top:422px">ini</div><div class="abs" style="left:54px;top:437px">iocontrol</div></div>
<svg class="abs" style="left:246px;top:68px" width="12" height="456" viewBox="0 0 12 456"><rect width="12" height="456" fill="#b3b3b3"/><path d="M0.5 12 L6.0 1 L11.5 12 Z" fill="#d9d9d9" stroke="#fff"/><path d="M6.0 1 L11.5 12.5 H0.5" fill="none" stroke="#828282"/><path d="M0.5 444 L6.0 455 L11.5 444 Z" fill="#d9d9d9" stroke="#828282"/><path d="M0.5 443.5 H11.5" stroke="#fff"/><path d="M6.0 455 L11.5 444" stroke="#fff"/><rect x="0.5" y="60.5" width="11" height="277" fill="#d9d9d9" stroke="#fff"/><path d="M11.5 60.5 V337.5 H0.5" fill="none" stroke="#828282"/></svg>
<div class="abs" style="left:261px;top:90px;width:576px;height:434px;border:1px solid;border-color:#fff #828282 #828282 #fff"></div>
<div class="abs dj nw" style="left:261px;top:68px;width:62px;height:24px;background:#d9d9d9;border:1px solid;border-color:#fff #828282 #d9d9d9 #fff;border-radius:3px 3px 0 0;font-size:12px;color:#000;padding:3px 0 0 9px">SHOW</div>
<div class="abs dj nw" style="left:323px;top:71px;width:68px;height:20px;background:#d9d9d9;border:1px solid;border-color:#fff #828282 #fff #d9d9d9;border-radius:0 3px 0 0;font-size:12px;color:#000;padding:2px 0 0 10px">WATCH</div>
<div class="abs" style="left:271px;top:102px;width:553px;height:338px;border:2px solid;border-color:#828282 #fff #fff #828282;background:#d9d9d9"></div>
<div class="abs" style="left:273px;top:104px;width:534px;height:332px;background:#fff;border:1px solid;border-color:#404040 #d9d9d9 #d9d9d9 #404040"></div>
<div class="abs mono" style="left:277px;top:108px;font-size:11.63px;line-height:15px;color:#000;white-space:pre">Component Pins:
Owner   Type  Dir         Value  Name
     9  bit   OUT         FALSE  gladevcp.xplus ==&gt; jog-x-pos</div>
<svg class="abs" style="left:807px;top:105px" width="13" height="331" viewBox="0 0 13 331"><rect width="13" height="331" fill="#b3b3b3"/><path d="M0.5 12 L6.5 1 L12.5 12 Z" fill="#d9d9d9" stroke="#fff"/><path d="M6.5 1 L12.5 12.5 H0.5" fill="none" stroke="#828282"/><path d="M0.5 319 L6.5 330 L12.5 319 Z" fill="#d9d9d9" stroke="#828282"/><path d="M0.5 318.5 H12.5" stroke="#fff"/><path d="M6.5 330 L12.5 319" stroke="#fff"/><rect x="0.5" y="13.5" width="12" height="307" fill="#d9d9d9" stroke="#fff"/><path d="M12.5 13.5 V320.5 H0.5" fill="none" stroke="#828282"/></svg>
<div class="abs" style="left:271px;top:444px;width:553px;height:65px;border:2px solid;border-color:#828282 #fff #fff #828282;box-shadow:inset 1px 1px 0 #fff, inset -1px -1px 0 #828282"></div>
<span class="abs dj nw" style="left:282px;top:458px;font-size:12px;letter-spacing:.2px;color:#000">Test HAL command :</span>
<div class="abs" style="left:416px;top:455px;width:317px;height:20px;background:#fff;border:1px solid;border-color:#828282 #fff #fff #828282"></div>
<div class="abs dj nw" style="left:739px;top:450px;width:76px;height:28px;border:1px solid;border-color:#fff #828282 #828282 #fff;font-size:12px;color:#000;text-align:center;line-height:28px">Execute</div>
<div class="abs mono nw" style="left:276px;top:483px;width:543px;height:21px;background:#fff;border:1px solid;border-color:#828282 #fff #fff #828282;font-size:11.63px;line-height:20px;padding-left:3px;color:#000">Commands may be tested here but they will NOT be saved</div>
</div>

<!-- ================= GLADEVCP ================= -->
<div id="gvl" class="abs" style="left:0;top:53px;width:1px;height:469px;background:#cfccc7"></div>
<div class="win" id="gvcp" style="left:1px;top:25px;width:289px;height:497px;border-right:1px solid #a7a39c;background:#f2f1f0">
<div class="tb" style="height:28px"><span class="wb" style="left:10px;top:5px;background:#5d5b56;border-color:#363531"><svg width="14" height="14" viewBox="0 0 14 14" style="display:block"><path d="M4.500 4.500 L9.500 9.500 M9.500 4.500 L4.500 9.500" stroke="#3e3d39" stroke-width="1.300"/></svg></span><span class="wb" style="left:28px;top:5px;background:#5d5b56;border-color:#363531"><svg width="14" height="14" viewBox="0 0 14 14" style="display:block"><path d="M4 7 H10" stroke="#3e3d39" stroke-width="1.400"/></svg></span><span class="wb" style="left:46px;top:5px;background:#5d5b56;border-color:#363531"><svg width="14" height="14" viewBox="0 0 14 14" style="display:block"><rect x="4.500" y="4.500" width="5" height="5" fill="none" stroke="#3e3d39" stroke-width="1.100"/></svg></span><span class="t" style="left:75px;top:4px">gladevcp</span></div>
<div class="abs dj" style="left:0;top:28px;width:289px;height:35px;background:#c0c0c0;border-bottom:1px solid #8a8a8a;font-size:10px;color:#000;line-height:38px;text-align:center;white-space:pre">Spindle:   0 RPM</div>
<div class="abs nw" style="left:3px;top:73px;font-size:14.4px;color:#3c3b37">Spindle Up To Speed</div>
<div class="abs" style="left:153px;top:75px;width:13px;height:13px;background:#00ee00;border:1px solid #000"></div>
<div class="gb dis" style="left:1px;top:102px;width:92px">Обнулить X</div><div class="gb" style="left:98px;top:102px;width:92px">X-</div><div class="gb" style="left:195px;top:102px;width:92px">X+</div>
<div class="gb dis" style="left:1px;top:134px;width:92px">Обнулить Y</div><div class="gb" style="left:98px;top:134px;width:92px">Y-</div><div class="gb" style="left:195px;top:134px;width:92px">Y+</div>
<div class="gb dis" style="left:1px;top:166px;width:92px">Обнулить Z</div><div class="gb" style="left:98px;top:166px;width:92px">Z-</div><div class="gb" style="left:195px;top:166px;width:92px">Z+</div>
<div class="gb dis" style="left:1px;top:198px;width:92px">Обнулить A</div><div class="gb" style="left:98px;top:198px;width:92px">A-</div><div class="gb" style="left:195px;top:198px;width:92px">A+</div>
<div class="gb" style="left:98px;top:230px;width:92px">X+</div>
<div class="gb dis" style="left:1px;top:296px;width:286px">X+10</div>
<div class="gb dis" style="left:1px;top:330px;width:286px">X-10</div>
<div class="gb" style="left:1px;top:364px;width:286px;height:96px;line-height:94px;background:linear-gradient(#efeeec,#dedddb 50%,#c9c8c5)">Запуск программы</div>
<div class="gb" style="left:1px;top:469px;width:64px">Вкл.</div>
<div class="gb" style="left:67px;top:469px;width:75px">Выкл.</div>
<div class="gb" style="left:144px;top:469px;width:64px">Вкл.</div>
<div class="gb" style="left:210px;top:469px;width:77px">Выкл.</div>
</div>

<!-- ================= TOP PANEL ================= -->
<div class="panel" id="top" style="top:0;height:25px;background:linear-gradient(#5a5952,#45443f 50%,#3c3b37);border-bottom:1px solid #33322e">
<svg class="abs" style="left:6px;top:2px" width="20" height="20" viewBox="0 0 20 20"><circle cx="10" cy="10" r="9.5" fill="#dfdbd2"/><circle cx="10" cy="10" r="4.6" fill="none" stroke="#4a4944" stroke-width="2.2"/><g fill="#dfdbd2" stroke="#dfdbd2" stroke-width="1.2"><circle cx="4" cy="10" r="1.9"/><circle cx="13" cy="4.8" r="1.9"/><circle cx="13" cy="15.2" r="1.9"/></g><g fill="#4a4944"><circle cx="4" cy="10" r="1.5"/><circle cx="13" cy="4.8" r="1.5"/><circle cx="13" cy="15.2" r="1.5"/></g></svg>
<span class="abs" style="left:34px;top:3px;letter-spacing:.27px">Приложения</span>
<span class="abs" style="left:135px;top:3px;letter-spacing:.2px">Переход</span>
<svg class="abs" style="left:1013px;top:5px" width="23" height="14" viewBox="0 0 23 14"><rect x="0.5" y="0.5" width="22" height="13" rx="2" fill="#dfdbd2"/><g fill="#45443f"><rect x="3" y="3" width="2" height="2"/><rect x="6" y="3" width="2" height="2"/><rect x="9" y="3" width="2" height="2"/><rect x="12" y="3" width="2" height="2"/><rect x="15" y="3" width="2" height="2"/><rect x="18" y="3" width="2" height="2"/><rect x="4" y="6" width="2" height="2"/><rect x="7" y="6" width="2" height="2"/><rect x="10" y="6" width="2" height="2"/><rect x="13" y="6" width="2" height="2"/><rect x="16" y="6" width="3" height="2"/><rect x="3" y="9.5" width="2" height="2"/><rect x="6" y="9.5" width="11" height="2"/><rect x="18" y="9.5" width="2" height="2"/></g></svg>
<span class="abs" style="left:1046px;top:3px">en</span>
<svg class="abs" style="left:1082px;top:3px" width="19" height="19" viewBox="0 0 19 19"><path d="M5.5 1 L10.5 7 L7.5 7 L7.5 13 L3.5 13 L3.5 7 L0.5 7 Z" fill="#dfdbd2"/><path d="M13.5 18 L8.5 12 L11.5 12 L11.5 6 L15.5 6 L15.5 12 L18.5 12 Z" fill="#dfdbd2"/></svg>
<svg class="abs" style="left:1115px;top:4px" width="20" height="16" viewBox="0 0 20 16"><path d="M1 5.5 H4 L8 2 V14 L4 10.5 H1 Z" fill="#77756f"/><path d="M12 5.5 L17 10.5 M17 5.5 L12 10.5" stroke="#77756f" stroke-width="1.8"/></svg>
<span class="abs" style="left:1150px;top:3px">09:37</span>
<svg class="abs" style="left:1199px;top:4px" width="15" height="15" viewBox="0 0 15 15"><path d="M7.5 0.5 C10 0.5 11 2.5 10.7 5 C10.5 7 9.6 8 9.3 8.8 C9.3 10 10.5 10.4 12.5 11.2 C14 11.8 14.5 12.8 14.5 14.5 L0.5 14.5 C0.5 12.8 1 11.8 2.5 11.2 C4.5 10.4 5.7 10 5.7 8.8 C5.4 8 4.5 7 4.3 5 C4 2.5 5 0.5 7.5 0.5 Z" fill="#dfdbd2"/></svg>
<span class="abs" style="left:1220px;top:3px">qw</span>
<svg class="abs" style="left:1254px;top:2px" width="19" height="20" viewBox="0 0 19 20"><g fill="none" stroke="#dfdbd2"><circle cx="9.5" cy="11" r="5" stroke-width="2.2"/><circle cx="9.5" cy="11" r="7" stroke-width="2.6" stroke-dasharray="2.6 2.9" stroke-dashoffset="1.3"/></g><rect x="7" y="3" width="5" height="6" fill="#45443f"/><rect x="8.5" y="1" width="2" height="8.5" fill="#dfdbd2"/></svg>
<svg id="cursor" class="abs" style="left:684px;top:288px;z-index:50" width="14" height="22" viewBox="0 0 14 22"><path d="M1.500 1.500 V17.500 L5.300 13.800 L8 20 L10.500 19 L7.800 12.800 H13 Z" fill="#000" stroke="#fff" stroke-width="1.200" stroke-linejoin="round"/></svg>
</div>

<!-- ================= BOTTOM PANEL ================= -->
<div class="panel" id="bot" style="top:1000px;height:24px;background:linear-gradient(#47463f,#3c3b37)">
<svg class="abs" style="left:3px;top:4px" width="18" height="15" viewBox="0 0 18 15"><defs><radialGradient id="sd" cx="0.5" cy="0.8" r="0.7"><stop offset="0" stop-color="#a0508a"/><stop offset="1" stop-color="#2a0c22"/></radialGradient></defs><rect x="0.500" y="0.500" width="17" height="14" rx="1" fill="#f0ece6"/><rect x="2" y="3" width="14" height="10" fill="url(#sd)"/></svg>
<div class="abs" style="left:24px;top:0;width:1px;height:24px;background:#33322e"></div><div class="abs" style="left:25px;top:0;width:1px;height:24px;background:#55544e"></div><div class="abs" style="left:34px;top:1px;width:1px;height:23px;background:#34332f"></div>
<svg class="abs" style="left:42px;top:4px" width="18" height="17" viewBox="0 0 18 17"><defs><linearGradient id="fg" x1="0" y1="0" x2="0" y2="1"><stop offset="0" stop-color="#f8a060"/><stop offset="1" stop-color="#d8501c"/></linearGradient></defs><path d="M1.500 15 V1.500 H7 L8.500 3.500 H15.500 V15 Z" fill="#e8e4dc" stroke="#b8b4ac" stroke-width="0.800"/><path d="M2.500 15.500 V5 H16.500 V15.500 Z" fill="url(#fg)" stroke="#b8461a" stroke-width="0.800"/></svg><span class="abs" style="left:66px;top:3px;letter-spacing:-.5px">Mesa_1</span>
<svg class="abs" style="left:266px;top:4px" width="18" height="17" viewBox="0 0 18 17"><path d="M2.500 1.500 H13.500 V15.500 H2.500 Z" fill="#f4f4f2" stroke="#8a8a86"/><path d="M4.500 5 H11 M4.500 8 H11 M4.500 11 H9" stroke="#9a9996"/><path d="M8 12.500 L15 4 L17 5.500 L10 14 L7.500 14.500 Z" fill="#e8c23a" stroke="#6a5a1a" stroke-width="0.8"/></svg><span class="abs" style="left:290px;top:3px;letter-spacing:0px">Mesa_1.hal (~/linuxcnc/c…</span>
<svg class="abs" style="left:490px;top:4px" width="18" height="17" viewBox="0 0 18 17"><rect x="1.500" y="3" width="13" height="10.500" fill="#e4e4e0" stroke="#9aa2ae" stroke-width="0.800"/><rect x="1.500" y="3" width="13" height="2.400" fill="#4a7ac0" stroke="#3a62a0" stroke-width="0.800"/></svg><span class="abs" style="left:514px;top:3px;letter-spacing:0px">gladevcp</span>
<svg class="abs" style="left:714px;top:4px" width="18" height="17" viewBox="0 0 18 17"><path d="M2.500 2 V14 M1 2 H4 M1 14 H4 M5 15.500 H16" stroke="#000" stroke-width="0.900" fill="none"/><text x="10.500" y="14" text-anchor="middle" font-family="Liberation Serif,serif" font-weight="bold" font-size="16" fill="#000">X</text></svg><span class="abs" style="left:738px;top:3px;letter-spacing:-.2px">axis.ngc</span>
<div class="abs" style="left:931px;top:0;width:223px;height:24px;background:linear-gradient(#2a2926,#31302c);border:1px solid;border-color:#22211e #6e6c66 #6e6c66 #22211e;border-radius:2px"></div><svg class="abs" style="left:940px;top:4px" width="18" height="17" viewBox="0 0 18 17"><rect x="1.500" y="3" width="13" height="10.500" fill="#e4e4e0" stroke="#9aa2ae" stroke-width="0.800"/><rect x="1.500" y="3" width="13" height="2.400" fill="#4a7ac0" stroke="#3a62a0" stroke-width="0.800"/></svg><span class="abs" style="left:963px;top:3px;letter-spacing:0px">HAL Configuration</span>
<div class="abs" style="left:1167px;top:1px;width:29px;height:23px;background:#c8603a"></div>
<svg class="abs" style="left:1167px;top:1px" width="29" height="23" viewBox="0 0 29 23"><rect x="2.500" y="2.500" width="19" height="12" fill="#f09a78" stroke="#fbe4d8"/><rect x="7.500" y="6.500" width="19" height="13" fill="#f09a78" stroke="#fbe4d8"/></svg>
<div class="abs" style="left:1196px;top:1px;width:27px;height:23px;background:#3a3935;border:1px solid #dfdbd2"></div>
<svg class="abs" style="left:1200px;top:3px" width="19" height="19" viewBox="0 0 22 22"><circle cx="11" cy="11" r="9.500" fill="#3a62c8"/><path d="M11 1.500 A9.500 9.500 0 1 0 20.500 11 C19 14 15 16 12 14 C9 12 10 8 13 8 C10 5 6 7 5 10 C4 6 7 2 11 1.500 Z" fill="#f0801a"/><path d="M3 6 Q6 3 11 1.500 Q7 5 5.500 9 Z" fill="#f8c020"/></svg>
<div class="abs" style="left:1252px;top:0;width:1px;height:24px;background:#2e2d2a"></div><div class="abs" style="left:1253px;top:0;width:1px;height:24px;background:#55544e"></div>
<div class="abs" style="left:257px;top:1px;width:1px;height:23px;background:#34332f"></div><div class="abs" style="left:481px;top:1px;width:1px;height:23px;background:#34332f"></div><div class="abs" style="left:706px;top:1px;width:1px;height:23px;background:#34332f"></div>
</div>

</body>
</html>
